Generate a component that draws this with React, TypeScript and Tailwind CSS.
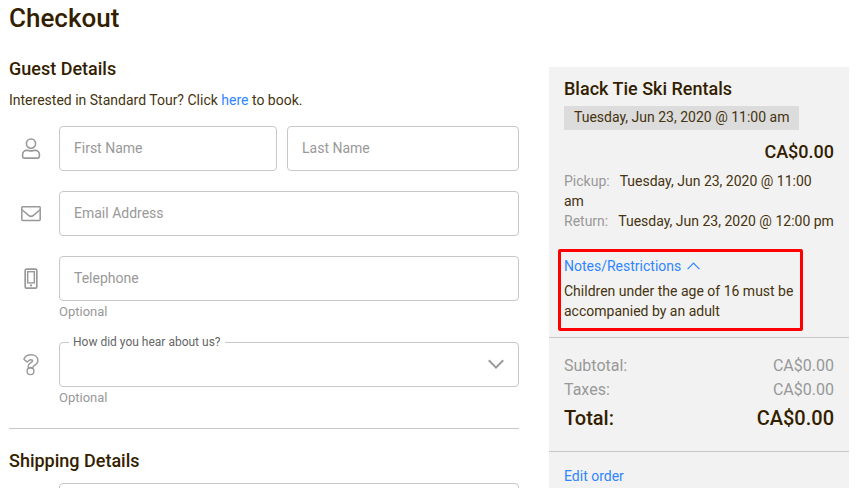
import type { ReactNode } from "react";

function UserIcon() {
  return (
    <svg width="20" height="22" viewBox="0 0 20 22" fill="none" stroke="#999" strokeWidth="1.6" aria-hidden="true">
      <circle cx="10" cy="5.6" r="4.6" />
      <path d="M5.8 12.4h1.6c1.7.6 3.5.6 5.2 0h1.6a4.2 4.2 0 0 1 4.2 4.2v2c0 .9-.6 1.5-1.5 1.5H3.1c-.9 0-1.5-.6-1.5-1.5v-2a4.2 4.2 0 0 1 4.2-4.2Z" />
    </svg>
  );
}

function MailIcon() {
  return (
    <svg width="20" height="16" viewBox="0 0 20 16" fill="none" stroke="#999" strokeWidth="1.5" aria-hidden="true">
      <rect x="0.8" y="0.8" width="18.4" height="13.6" rx="0.8" />
      <path d="M1 3.8l6.6 5.6c1.8 1.5 3 1.5 4.8 0L19 3.8" />
    </svg>
  );
}

function PhoneIcon() {
  return (
    <svg width="14" height="22" viewBox="0 0 14 22" fill="none" stroke="#999" strokeWidth="1.7" aria-hidden="true">
      <rect x="1.2" y="1.2" width="11.6" height="19" rx="1.4" />
      <rect x="3.7" y="3.7" width="6.6" height="11.2" strokeWidth="1.4" />
      <circle cx="7" cy="17.4" r="1.1" fill="#999" stroke="none" />
    </svg>
  );
}

function QuestionIcon() {
  return (
    <svg width="16" height="22" viewBox="0 0 16 22" fill="none" stroke="#999" strokeWidth="1.4" strokeLinejoin="round" aria-hidden="true">
      <path d="M1.2 4.4C2.600 2 5 .8 8 .8c3.900 0 6.900 2.100 6.900 5.700 0 4-3.900 4.800-4.700 6.100-.3.500-.5 1.200-1.300 1.200H6.300c-.8 0-1.200-.4-1.200-1.200 0-3.500 4.500-4.300 4.500-5.700 0-.8-.7-1.100-1.600-1.100-1.600 0-2.300 1.100-3.200 1.800-.4.300-.8.300-1.200 0L1.400 5.700c-.4-.3-.5-.8-.2-1.300Z" />
      <circle cx="7.500" cy="17.200" r="3.400" />
    </svg>
  );
}

const field =
  "block h-[45px] w-full min-w-0 rounded-[4px] border border-[#c8c8c8] bg-white px-3.5 pb-px text-sm text-[#46330f] outline-none placeholder:text-[#999] placeholder:opacity-100";

function Row({ icon, children }: { icon?: ReactNode; children: ReactNode }) {
  return (
    <div className="flex">
      <div className="flex h-[45px] w-[50px] shrink-0 items-center pl-3">
        <div className="flex w-5 justify-center">{icon}</div>
      </div>
      <div className="min-w-0 flex-1">{children}</div>
    </div>
  );
}

function Hint() {
  return <p className="text-[13px] leading-[21px] text-[#999]">Optional</p>;
}

function Amount({ label, value }: { label: string; value: string }) {
  return (
    <div className="flex justify-between text-base leading-6 text-[#999]">
      <dt>{label}</dt>
      <dd>{value}</dd>
    </div>
  );
}

export default function App() {
  return (
    <div className="flex h-screen gap-[30px] overflow-hidden bg-white px-[9px] font-[Roboto,'Liberation_Sans',sans-serif] text-sm text-[#46330f]">
      <main className="min-w-0 flex-1">
        <h1 className="pt-0.5 text-[26px] leading-8 font-medium text-[#331e00]">Checkout</h1>

        <section>
          <h2 className="mt-6 text-lg leading-[22px] font-medium text-[#331e00]">Guest Details</h2>
          <p className="mt-2.5 leading-5">
            Interested in Standard Tour? Click{" "}
            <a href="#book" className="text-[#2f86ff]">here</a> to book.
          </p>

          <form className="mt-4 flex flex-col gap-5">
            <Row icon={<UserIcon />}>
              <div className="grid grid-cols-[218fr_232fr] gap-2.5">
                <input className={field} placeholder="First Name" aria-label="First Name" />
                <input className={field} placeholder="Last Name" aria-label="Last Name" />
              </div>
            </Row>
            <Row icon={<MailIcon />}>
              <input type="email" className={field} placeholder="Email Address" aria-label="Email Address" />
            </Row>
            <Row icon={<PhoneIcon />}>
              <input type="tel" className={field} placeholder="Telephone" aria-label="Telephone" />
              <Hint />
            </Row>
            <Row icon={<QuestionIcon />}>
              <div className="relative">
                <label htmlFor="heard" className="absolute -top-2 left-2.5 bg-white px-1 text-xs leading-4 text-[#666]">
                  How did you hear about us?
                </label>
                <select id="heard" className={`${field} appearance-none`} defaultValue="">
                  <option value=""></option>
                </select>
                <svg className="pointer-events-none absolute top-[17px] right-[15px]" width="16" height="11" viewBox="0 0 16 11" fill="none" stroke="#999" strokeWidth="2" aria-hidden="true">
                  <path d="M0.8 1.2L8 8.6l7.2-7.4" />
                </svg>
              </div>
              <Hint />
            </Row>
          </form>
        </section>

        <hr className="mt-5 border-[#c8c8c8]" />

        <section>
          <h2 className="mt-[21px] mb-[11px] text-lg leading-[22px] font-medium text-[#331e00]">Shipping Details</h2>
          <Row>
            <input className={field} aria-label="Shipping address" />
          </Row>
        </section>
      </main>

      <aside className="mt-[67px] w-[300px] shrink-0 bg-[#f2f2f2]">
        <div className="px-[15px] pt-2.5">
          <h2 className="text-lg leading-6 font-medium text-[#331e00]">Black Tie Ski Rentals</h2>
          <p className="mt-[5px] w-fit bg-[#dcdcdc] px-2.5 pb-0.5 leading-[22px]">Tuesday, Jun 23, 2020 @ 11:00 am</p>
          <p className="mt-2.5 text-right text-lg leading-6 font-medium text-[#331e00]">CA$0.00</p>
          <div className="mt-[7px] leading-5">
            <p>
              <span className="mr-2.5 text-[#999]">Pickup:</span>Tuesday, Jun 23, 2020 @ 11:00 am
            </p>
            <p>
              <span className="mr-2.5 text-[#999]">Return:</span>Tuesday, Jun 23, 2020 @ 12:00 pm
            </p>
          </div>
        </div>
        <div className="mx-[9px] mt-[18px] mb-1.5 w-[245px] rounded-[2px] border-3 border-[#ff0000] px-[3px] pt-1 pb-[7px] leading-5">
          <button type="button" className="flex items-center gap-1.5 text-[#2f86ff]">
            Notes/Restrictions
            <svg width="13" height="8" viewBox="0 0 13 8" fill="none" stroke="currentColor" strokeWidth="1.2" aria-hidden="true">
              <path d="M0.6 7.2L6.5 1l5.9 6.2" />
            </svg>
          </button>
          <p className="mt-[5px]">Children under the age of 16 must be accompanied by an adult</p>
        </div>
        <dl className="border-y border-[#c8c8c8] px-[15px] pt-4 pb-5">
          <Amount label="Subtotal:" value="CA$0.00" />
          <Amount label="Taxes:" value="CA$0.00" />
          <div className="mt-[3px] flex justify-between text-xl leading-[26px] font-medium text-[#331e00]">
            <dt>Total:</dt>
            <dd>CA$0.00</dd>
          </div>
        </dl>
        <a href="#edit" className="mx-[15px] mt-3.5 block w-fit leading-5 text-[#2f86ff]">Edit order</a>
      </aside>
    </div>
  );
}
